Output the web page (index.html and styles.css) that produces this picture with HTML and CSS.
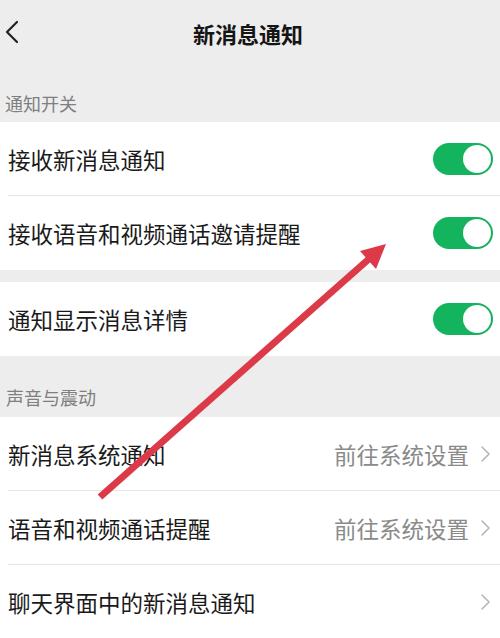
FILE: index.html
```html
<!DOCTYPE html>
<html lang="zh-CN">
<head>
<meta charset="utf-8">
<title>新消息通知</title>
<link rel="stylesheet" href="styles.css">
</head>
<body>
<div class="page">
  <header class="nav">
    <span class="back">
      <svg width="14" height="24" viewBox="0 0 14 24"><polyline points="12,2 2,12 12,22" fill="none" stroke="#222" stroke-width="2.2" stroke-linecap="round" stroke-linejoin="round"/></svg>
    </span>
    <h1 class="title">新消息通知</h1>
  </header>

  <div class="label label-first">通知开关</div>
  <div class="group">
    <div class="row"><span class="text">接收新消息通知</span><span class="switch"><span class="knob"></span></span></div>
    <div class="row"><span class="text">接收语音和视频通话邀请提醒</span><span class="switch"><span class="knob"></span></span></div>
  </div>
  <div class="gap"></div>
  <div class="group">
    <div class="row"><span class="text">通知显示消息详情</span><span class="switch"><span class="knob"></span></span></div>
  </div>

  <div class="label label-second">声音与震动</div>
  <div class="group">
    <div class="row"><span class="text">新消息系统通知</span><span class="right"><span class="value">前往系统设置</span><svg class="chev" width="11" height="18" viewBox="0 0 11 18"><polyline points="2,2 9,9 2,16" fill="none" stroke="#b5b5b5" stroke-width="1.6" stroke-linecap="round" stroke-linejoin="round"/></svg></span></div>
    <div class="row"><span class="text">语音和视频通话提醒</span><span class="right"><span class="value">前往系统设置</span><svg class="chev" width="11" height="18" viewBox="0 0 11 18"><polyline points="2,2 9,9 2,16" fill="none" stroke="#b5b5b5" stroke-width="1.6" stroke-linecap="round" stroke-linejoin="round"/></svg></span></div>
    <div class="row"><span class="text">聊天界面中的新消息通知</span><span class="right"><svg class="chev" width="11" height="18" viewBox="0 0 11 18"><polyline points="2,2 9,9 2,16" fill="none" stroke="#b5b5b5" stroke-width="1.6" stroke-linecap="round" stroke-linejoin="round"/></svg></span></div>
  </div>

  <svg class="arrow" width="500" height="638" viewBox="0 0 500 638">
    <line x1="100" y1="497" x2="370" y2="258" stroke="#dc3a48" stroke-width="7" stroke-linecap="butt"/>
    <polygon points="386,244 360,251 376,269" fill="#dc3a48"/>
  </svg>
</div>
</body>
</html>
```

FILE: styles.css
```css
html, body {
  margin: 0;
  padding: 0;
  background: #ededed;
}
.page {
  position: relative;
  width: 500px;
  height: 638px;
  overflow: hidden;
  background: #ededed;
  font-family: "Noto Sans CJK SC", "Noto Sans", sans-serif;
  color: #1a1a1a;
}
.nav {
  position: relative;
  height: 66px;
  display: flex;
  align-items: center;
  justify-content: center;
}
.back {
  position: absolute;
  left: 5px;
  top: 20px;
  display: flex;
}
.title {
  margin: 0;
  font-size: 22px;
  font-weight: 700;
  line-height: 1;
  color: #151515;
  transform: translateX(-2px);
}
.label {
  font-size: 18px;
  line-height: 18px;
  color: #7f7f7f;
  padding-left: 5px;
}
.label-first {
  padding-top: 28px;
  padding-bottom: 10px;
}
.label-second {
  padding-top: 32px;
  padding-bottom: 11px;
  padding-left: 6px;
}
.group {
  background: #fff;
  padding-left: 8px;
}
.row {
  height: 74px;
  display: flex;
  align-items: center;
  justify-content: space-between;
  padding-right: 7px;
  box-shadow: inset 0 -1px 0 #e6e6e6;
}
.row:last-child {
  box-shadow: none;
}
.group:nth-of-type(3) .row {
  height: 73px;
}
.text {
  font-size: 22.5px;
  line-height: 1;
  color: #1a1a1a;
}
.gap {
  height: 12px;
}
.switch {
  position: relative;
  width: 60px;
  height: 32px;
  border-radius: 16px;
  background: #14b35d;
  flex: none;
}
.knob {
  position: absolute;
  right: 2px;
  top: 2px;
  width: 28px;
  height: 28px;
  border-radius: 50%;
  background: #fff;
  box-shadow: 0 0 1px rgba(0,0,0,0.15);
}
.right {
  display: flex;
  align-items: center;
  gap: 11px;
}
.value {
  font-size: 22.5px;
  line-height: 1;
  color: #8a8a8a;
}
.chev {
  display: block;
  margin-right: 2px;
}
.arrow {
  position: absolute;
  left: 0;
  top: 0;
  pointer-events: none;
}
```
